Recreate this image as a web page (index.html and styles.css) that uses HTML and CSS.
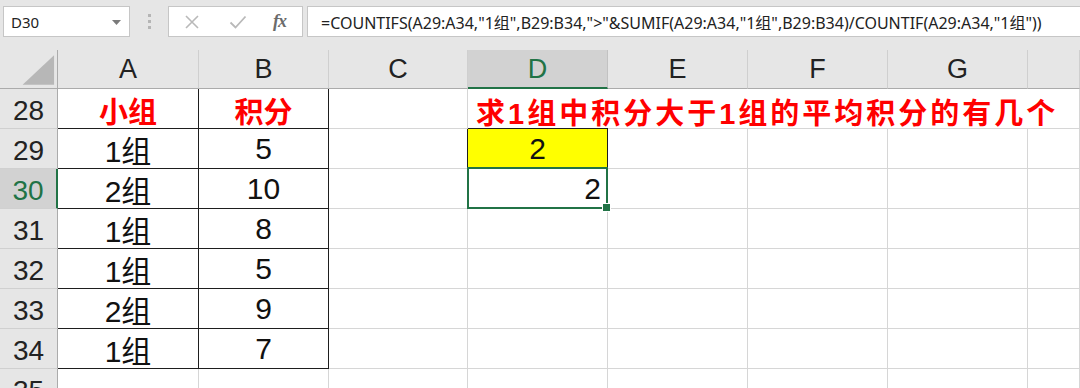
FILE: index.html
```html
<!DOCTYPE html>
<html>
<head>
<meta charset="utf-8">
<link rel="stylesheet" href="styles.css">
</head>
<body>
<div class="app">
  <div class="fbar">
    <div class="namebox">
      <span class="ref">D30</span>
      <svg class="caret" width="9" height="5" viewBox="0 0 9 5"><path d="M0 0 L9 0 L4.5 5 Z" fill="#7a7a7a"/></svg>
    </div>
    <div class="grip"><i></i><i></i><i></i></div>
    <div class="btns">
      <svg class="ico" width="16" height="16" viewBox="0 0 16 16"><path d="M2 2 L14 14 M14 2 L2 14" stroke="#b9b9b9" stroke-width="1.6" fill="none"/></svg>
      <svg class="ico" width="18" height="16" viewBox="0 0 18 16"><path d="M1.5 8.5 L6.5 13.5 L16.5 2.5" stroke="#b9b9b9" stroke-width="1.8" fill="none"/></svg>
      <span class="fx">fx</span>
    </div>
    <div class="formula">=COUNTIFS(A29:A34,"1组",B29:B34,"&gt;"&amp;SUMIF(A29:A34,"1组",B29:B34)/COUNTIF(A29:A34,"1组"))</div>
  </div>

  <div class="sheet">
    <!-- header row -->
    <div class="corner"><svg width="58" height="38" viewBox="0 0 58 38"><path d="M23 35 L55 35 L55 5 Z" fill="#b7b7b7"/></svg></div>
    <div class="ch">A</div>
    <div class="ch">B</div>
    <div class="ch">C</div>
    <div class="ch ch-sel">D</div>
    <div class="ch">E</div>
    <div class="ch">F</div>
    <div class="ch">G</div>
    <div class="ch"></div>

    <!-- 28 -->
    <div class="rh">28</div>
    <div class="c tb ta hdr">小组</div>
    <div class="c tb hdr">积分</div>
    <div class="c"></div>
    <div class="c title">求1组中积分大于1组的平均积分的有几个</div>
    <div class="c nor"></div>
    <div class="c nor"></div>
    <div class="c nor"></div>
    <div class="c"></div>

    <!-- 29 -->
    <div class="rh">29</div>
    <div class="c tb ta">1组</div>
    <div class="c tb">5</div>
    <div class="c dk-r"></div>
    <div class="c yellow">2</div>
    <div class="c"></div>
    <div class="c"></div>
    <div class="c"></div>
    <div class="c"></div>

    <!-- 30 -->
    <div class="rh rh-sel">30</div>
    <div class="c tb ta">2组</div>
    <div class="c tb">10</div>
    <div class="c"></div>
    <div class="c active">2</div>
    <div class="c"></div>
    <div class="c"></div>
    <div class="c"></div>
    <div class="c"></div>

    <!-- 31 -->
    <div class="rh">31</div>
    <div class="c tb ta">1组</div>
    <div class="c tb">8</div>
    <div class="c"></div>
    <div class="c"></div>
    <div class="c"></div>
    <div class="c"></div>
    <div class="c"></div>
    <div class="c"></div>

    <!-- 32 -->
    <div class="rh">32</div>
    <div class="c tb ta">1组</div>
    <div class="c tb">5</div>
    <div class="c"></div>
    <div class="c"></div>
    <div class="c"></div>
    <div class="c"></div>
    <div class="c"></div>
    <div class="c"></div>

    <!-- 33 -->
    <div class="rh">33</div>
    <div class="c tb ta">2组</div>
    <div class="c tb">9</div>
    <div class="c"></div>
    <div class="c"></div>
    <div class="c"></div>
    <div class="c"></div>
    <div class="c"></div>
    <div class="c"></div>

    <!-- 34 -->
    <div class="rh">34</div>
    <div class="c tb ta">1组</div>
    <div class="c tb">7</div>
    <div class="c"></div>
    <div class="c"></div>
    <div class="c"></div>
    <div class="c"></div>
    <div class="c"></div>
    <div class="c"></div>

    <!-- 35 -->
    <div class="rh">35</div>
    <div class="c"></div>
    <div class="c"></div>
    <div class="c"></div>
    <div class="c"></div>
    <div class="c"></div>
    <div class="c"></div>
    <div class="c"></div>
    <div class="c"></div>
  </div>
</div>
</body>
</html>
```

FILE: styles.css
```css
* { box-sizing: border-box; }
html, body { margin: 0; padding: 0; }
body {
  width: 1080px;
  height: 388px;
  overflow: hidden;
  background: #ffffff;
  font-family: "Liberation Sans", "Noto Sans CJK SC", sans-serif;
}
.app { width: 1080px; height: 388px; overflow: hidden; }

/* formula bar */
.fbar {
  height: 50px;
  background: #e6e6e6;
  display: flex;
  align-items: flex-start;
  padding: 6px 0 0 3px;
}
.namebox {
  width: 127px;
  height: 31px;
  background: #fff;
  border: 1px solid #c6c6c6;
  display: flex;
  align-items: center;
  justify-content: space-between;
  padding: 0 8px 0 7px;
}
.ref {
  font-family: "Noto Sans", "Liberation Sans", sans-serif;
  font-size: 15px;
  color: #222;
}
.caret { margin-top: 1px; }
.grip {
  width: 38px;
  height: 31px;
  display: flex;
  flex-direction: column;
  align-items: center;
  justify-content: center;
  gap: 3px;
}
.grip i {
  display: block;
  width: 3px;
  height: 3px;
  background: #b5b5b5;
}
.btns {
  width: 135px;
  height: 31px;
  background: #fff;
  border: 1px solid #c6c6c6;
  display: flex;
  align-items: center;
  padding: 0 0 0 15px;
  gap: 0;
}
.btns .ico:nth-child(1) { margin-right: 29px; }
.btns .ico:nth-child(2) { margin-right: 26px; }
.fx {
  font-family: "Liberation Serif", serif;
  font-style: italic;
  font-weight: bold;
  font-size: 18px;
  color: #6b6b6b;
  letter-spacing: -1px;
}
.formula {
  flex: 1;
  height: 31px;
  margin-left: 4px;
  background: #fff;
  border: 1px solid #c6c6c6;
  border-right: none;
  display: flex;
  align-items: center;
  padding-left: 13px;
  font-family: "Noto Sans", "Noto Sans CJK SC", sans-serif;
  font-size: 16px;
  color: #222;
  white-space: nowrap;
  overflow: hidden;
}

/* sheet grid */
.sheet {
  display: grid;
  grid-template-columns: 58px 141px 130px 139px 140px 140px 140px 140px 1fr;
  grid-template-rows: 39px repeat(8, 40px);
  background: #fff;
}
.corner {
  background: #e6e6e6;
  border-right: 1px solid #ababab;
  border-bottom: 1px solid #ababab;
  display: flex;
  align-items: flex-start;
}
.ch {
  background: #e6e6e6;
  border-right: 1px solid #cfcfcf;
  border-bottom: 1px solid #ababab;
  display: flex;
  align-items: center;
  justify-content: center;
  font-size: 27px;
  color: #222;
  padding-top: 1px;
}
.ch-sel {
  background: #d2d2d2;
  color: #217346;
  border-bottom: 2px solid #217346;
  border-right-color: #c2c2c2;
}
.rh {
  background: #e6e6e6;
  border-right: 1px solid #ababab;
  border-bottom: 1px solid #d0d0d0;
  display: flex;
  align-items: center;
  justify-content: center;
  font-size: 28px;
  color: #222;
  padding-top: 4px;
}
.rh-sel {
  background: #d2d2d2;
  color: #217346;
  border-right: 2px solid #217346;
}

.c {
  border-right: 1px solid #d6d6d6;
  border-bottom: 1px solid #d6d6d6;
  display: flex;
  align-items: center;
  justify-content: center;
  font-size: 30px;
  color: #111;
  white-space: nowrap;
  position: relative;
}
.tb {
  border-right: 1px solid #1e1e1e;
  border-bottom: 1px solid #1e1e1e;
}
.hdr {
  color: #ff0000;
  font-weight: bold;
  font-size: 29px;
  padding-top: 2px;
}
.dk-r { border-right: 1px solid #1e1e1e; }
.nor { border-right: none; }
.title {
  border-right: none;
  border-bottom: 1px solid #1e1e1e;
  justify-content: flex-start;
  padding-left: 8px;
  padding-top: 4px;
  color: #ff0000;
  font-weight: bold;
  font-size: 29px;
  letter-spacing: 3px;
  overflow: visible;
}
.yellow {
  background: #ffff00;
  border-right: 1px solid #1e1e1e;
  border-bottom: 1px solid #1e1e1e;
}
.active {
  justify-content: flex-end;
  padding-right: 6px;
}
.active::after {
  content: "";
  position: absolute;
  top: -2px;
  left: -1px;
  right: -1px;
  bottom: -1px;
  border: 2px solid #217346;
}
.active::before {
  content: "";
  position: absolute;
  right: -4px;
  bottom: -4px;
  width: 7px;
  height: 7px;
  background: #217346;
  border: 1px solid #fff;
  z-index: 2;
}
```
